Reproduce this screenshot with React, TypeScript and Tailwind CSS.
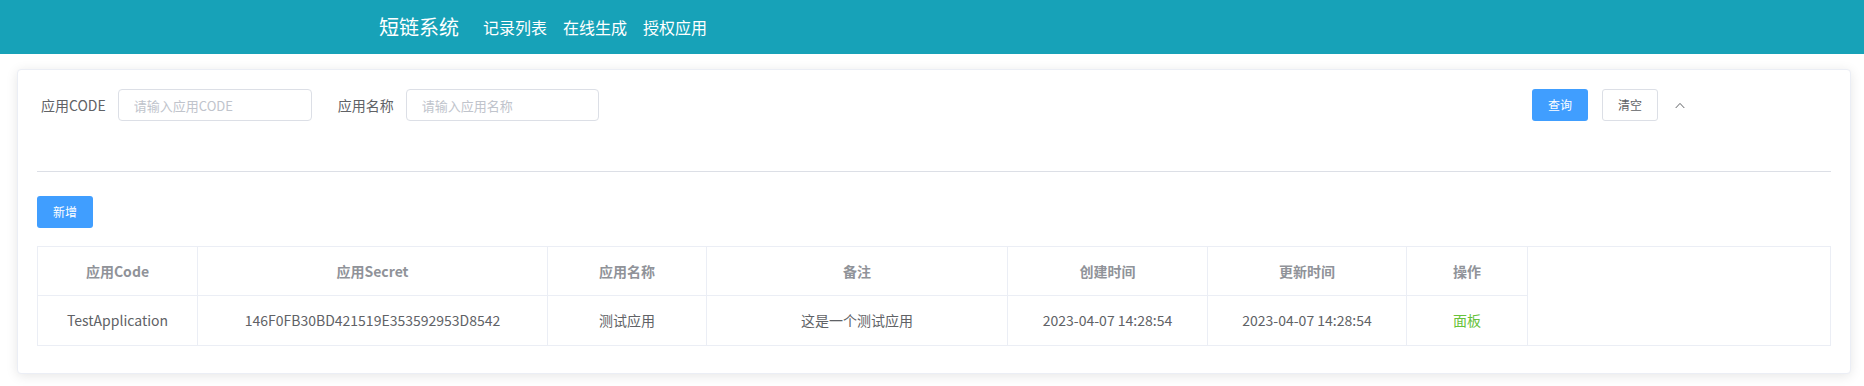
import { useState } from "react";

const columns = [
  { label: "应用Code", width: "w-[160px]" },
  { label: "应用Secret", width: "w-[350px]" },
  { label: "应用名称", width: "w-[159px]" },
  { label: "备注", width: "w-[301px]" },
  { label: "创建时间", width: "w-[200px]" },
  { label: "更新时间", width: "w-[199px]" },
  { label: "操作", width: "w-[121px]" },
];

const rows = [
  {
    code: "TestApplication",
    secret: "146F0FB30BD421519E353592953D8542",
    name: "测试应用",
    remark: "这是一个测试应用",
    createdAt: "2023-04-07 14:28:54",
    updatedAt: "2023-04-07 14:28:54",
  },
];

export default function App() {
  const [code, setCode] = useState("");
  const [name, setName] = useState("");

  const navLinks = ["记录列表", "在线生成", "授权应用"];

  return (
    <div className="min-h-screen bg-white font-['Noto_Sans_CJK_SC','Noto_Sans',sans-serif] text-[#606266]">
      {/* Header */}
      <header className="h-[54px] bg-[#17a2b8] flex items-center pl-[379px] text-white">
        <span className="text-[20px] leading-none">短链系统</span>
        <nav className="flex ml-[16px]">
          {navLinks.map((link) => (
            <a key={link} href="#" className="px-[8px] text-[16px] leading-none">
              {link}
            </a>
          ))}
        </nav>
      </header>

      <div className="pt-[15px] pl-[17px] pr-[13px]">
        <div className="rounded-[4px] border border-[#ebeef5] bg-white shadow-[0_2px_12px_0_rgba(0,0,0,0.1)] pt-[19px] px-[19px] pb-[27px]">
          {/* Search form */}
          <div className="flex items-center h-[32px] pl-[4px]">
            <label className="text-[14px] mr-[12px]">应用CODE</label>
            <input
              value={code}
              onChange={(e) => setCode(e.target.value)}
              placeholder="请输入应用CODE"
              className="w-[194px] h-[32px] rounded-[4px] border border-[#dcdfe6] px-[15px] text-[13px] outline-none placeholder:text-[#c0c4cc]"
            />
            <label className="text-[14px] ml-[26px] mr-[12px]">应用名称</label>
            <input
              value={name}
              onChange={(e) => setName(e.target.value)}
              placeholder="请输入应用名称"
              className="w-[193px] h-[32px] rounded-[4px] border border-[#dcdfe6] px-[15px] text-[13px] outline-none placeholder:text-[#c0c4cc]"
            />
            <div className="ml-auto mr-[146px] flex items-center">
              <button className="w-[56px] h-[32px] rounded-[3px] bg-[#409eff] text-white text-[12px]">
                查询
              </button>
              <button className="ml-[14px] w-[56px] h-[32px] rounded-[3px] border border-[#dcdfe6] bg-white text-[12px] text-[#606266]">
                清空
              </button>
              <button className="ml-[17px] w-[10px] h-[32px] flex items-center justify-center">
                <svg width="11" height="7" viewBox="0 0 11 7" fill="none">
                  <path d="M0.8 6.2 L5.5 1.2 L10.2 6.2" stroke="#606266" strokeWidth="1.1" />
                </svg>
              </button>
            </div>
          </div>

          <div className="mt-[50px] h-px bg-[#dcdfe6]" />

          <button className="mt-[24px] w-[56px] h-[32px] rounded-[3px] bg-[#409eff] text-white text-[12px]">
            新增
          </button>

          {/* Table */}
          <div className="mt-[18px] border border-[#ebeef5] text-[14px]">
            <div className="flex">
              {columns.map((col) => (
                <div
                  key={col.label}
                  className={`${col.width} h-[49px] shrink-0 flex items-center justify-center border-r border-b border-[#ebeef5] font-bold text-[#909399]`}
                >
                  {col.label}
                </div>
              ))}
            </div>
            {rows.map((row) => (
              <div key={row.code} className="flex">
                <div className="w-[160px] h-[49px] shrink-0 flex items-center justify-center border-r border-[#ebeef5]">
                  {row.code}
                </div>
                <div className="w-[350px] h-[49px] shrink-0 flex items-center justify-center border-r border-[#ebeef5]">
                  {row.secret}
                </div>
                <div className="w-[159px] h-[49px] shrink-0 flex items-center justify-center border-r border-[#ebeef5]">
                  {row.name}
                </div>
                <div className="w-[301px] h-[49px] shrink-0 flex items-center justify-center border-r border-[#ebeef5]">
                  {row.remark}
                </div>
                <div className="w-[200px] h-[49px] shrink-0 flex items-center justify-center border-r border-[#ebeef5]">
                  {row.createdAt}
                </div>
                <div className="w-[199px] h-[49px] shrink-0 flex items-center justify-center border-r border-[#ebeef5]">
                  {row.updatedAt}
                </div>
                <div className="w-[121px] h-[49px] shrink-0 flex items-center justify-center border-r border-[#ebeef5]">
                  <a href="#" className="text-[#67c23a]">
                    面板
                  </a>
                </div>
              </div>
            ))}
          </div>
        </div>
      </div>
    </div>
  );
}
